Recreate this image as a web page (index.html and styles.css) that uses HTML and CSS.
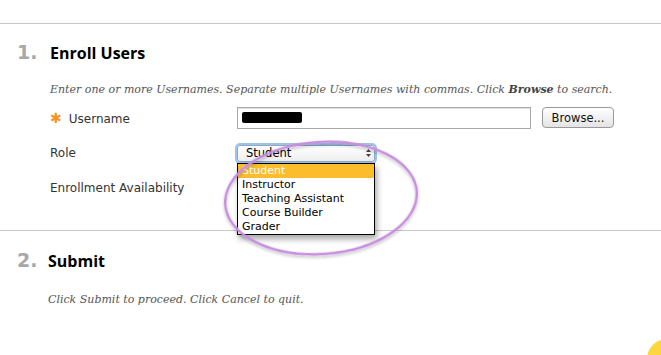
FILE: index.html
```html
<!DOCTYPE html>
<html lang="en">
<head>
    <meta charset="UTF-8">
    <title>Enroll Users</title>
    <link rel="stylesheet" href="styles.css">
</head>
<body>
    <div class="topbar"></div>

    <!-- Passo 1 -->
    <div class="step step-one">
        <div class="step-head">
            <span class="step-num">1.</span>
            <h2 class="step-title">Enroll Users</h2>
        </div>
        <p class="step-help">Enter one or more Usernames. Separate multiple Usernames with commas. Click <b>Browse</b> to search.</p>

        <div class="field-row row-user">
            <label class="field-label"><span class="req">&#x2731;</span>Username</label>
            <div class="field-ctrl">
                <div class="text-input"><span class="redact"></span></div>
                <button class="browse-btn">Browse...</button>
            </div>
        </div>

        <div class="field-row row-role">
            <label class="field-label">Role</label>
            <div class="field-ctrl">
                <div class="select-wrap">
                    <div class="select-box">
                        <span>Student</span>
                        <svg class="arrows" width="5" height="8" viewBox="0 0 5 8">
                            <path d="M2.5 0 L5 3 L0 3 Z M2.5 8 L5 5 L0 5 Z" fill="#444"/>
                        </svg>
                    </div>
                    <ul class="select-list">
                        <li class="active">Student</li>
                        <li>Instructor</li>
                        <li>Teaching Assistant</li>
                        <li>Course Builder</li>
                        <li>Grader</li>
                    </ul>
                    <svg class="circle-mark" width="210" height="130" viewBox="0 0 210 130">
                        <defs>
                            <filter id="soft" x="-10%" y="-10%" width="120%" height="130%">
                                <feDropShadow dx="0" dy="2" stdDeviation="1.5" flood-color="#000" flood-opacity="0.25"/>
                            </filter>
                        </defs>
                        <ellipse cx="103" cy="59" rx="96" ry="56" transform="rotate(-4 103 59)" fill="none" stroke="#c88ee0" stroke-width="2.5" filter="url(#soft)"/>
                    </svg>
                </div>
            </div>
        </div>

        <div class="field-row row-avail">
            <label class="field-label">Enrollment Availability</label>
        </div>
    </div>

    <!-- Passo 2 -->
    <div class="step step-two">
        <div class="step-head">
            <span class="step-num">2.</span>
            <h2 class="step-title">Submit</h2>
        </div>
        <p class="step-help">Click Submit to proceed. Click Cancel to quit.</p>
    </div>

    <div class="sun"></div>
</body>
</html>
```

FILE: styles.css
```css
html {
    overflow: hidden;
}

body {
    margin: 0;
    background-color: white;
    font-family: "DejaVu Sans", sans-serif;
    color: #222;
    width: 661px;
    height: 355px;
    overflow: hidden;
    position: relative;
}

.topbar {
    height: 23px;
    border-bottom: 1px solid #c8c8c8;
}

.step {
    border-bottom: 1px solid #c8c8c8;
}

.step-one {
    height: 206px;
}

.step-two {
    border-bottom: none;
}

.step-head {
    display: flex;
    align-items: baseline;
    padding-left: 17px;
}

.step-one .step-head {
    padding-top: 17px;
}

.step-two .step-head {
    padding-top: 18px;
}

.step-num {
    width: 33px;
    font-size: 19px;
    font-weight: bold;
    color: #a8a8a8;
}

.step-two .step-num {
    width: 31px;
}

.step-title {
    margin: 0;
    font-family: "Open Sans", sans-serif;
    font-size: 16px;
    font-weight: bold;
    color: #000;
}

.step-help {
    margin: 19px 0 0 50px;
    font-family: "DejaVu Serif", serif;
    font-style: italic;
    font-size: 11px;
    color: #555;
}

.step-two .step-help {
    margin-left: 48px;
    margin-top: 21px;
}

.step-help b {
    color: #444;
}

.field-row {
    display: flex;
    align-items: center;
    padding-left: 50px;
}

.field-label {
    width: 187px;
    font-size: 12px;
    color: #333;
}

.req {
    color: #f7931e;
    font-size: 14px;
    margin-right: 7px;
}

.field-ctrl {
    display: flex;
    align-items: center;
}

.row-user {
    margin-top: 10px;
    height: 23px;
}

.row-role {
    margin-top: 15px;
    height: 18px;
}

.row-avail {
    margin-top: 19px;
}

.text-input {
    width: 292px;
    height: 20px;
    border: 1px solid #aaa;
    box-shadow: inset 0 1px 1px #ddd;
    display: flex;
    align-items: center;
}

.redact {
    display: inline-block;
    width: 60px;
    height: 11px;
    margin-left: 4px;
    background-color: #000;
    border-radius: 2px;
}

.browse-btn {
    margin-left: 11px;
    width: 72px;
    height: 21px;
    padding: 0;
    border: 1px solid #999;
    border-radius: 4px;
    background: linear-gradient(#fff, #e4e4e4);
    font-family: "DejaVu Sans", sans-serif;
    font-size: 11.5px;
    color: #111;
}

.select-wrap {
    position: relative;
}

.select-box {
    box-sizing: content-box;
    width: 125px;
    height: 15px;
    border: 1px solid #8aa8c8;
    border-radius: 3px;
    box-shadow: 0 0 0 2px #9ec3e6;
    background: linear-gradient(#fff, #eee);
    display: flex;
    justify-content: space-between;
    align-items: center;
    padding: 0 3px 0 8px;
    font-size: 11.5px;
    color: #000;
}

.select-list {
    position: absolute;
    left: 0;
    top: 18px;
    width: 136px;
    margin: 0;
    padding: 0;
    list-style: none;
    background-color: white;
    border: 1px solid #000;
    box-shadow: 2px 4px 6px rgba(0, 0, 0, 0.35);
    font-size: 11px;
    color: #000;
}

.select-list li {
    height: 14px;
    line-height: 14px;
    padding-left: 4px;
}

.select-list li.active {
    background-color: #fbbd2b;
    color: white;
}

.circle-mark {
    position: absolute;
    left: -19px;
    top: -6px;
    pointer-events: none;
}

.sun {
    position: absolute;
    left: 647px;
    top: 339px;
    width: 14px;
    height: 16px;
    background: radial-gradient(circle at 20px 20px, #fcd63c 19.5px, transparent 20.5px);
}
```
